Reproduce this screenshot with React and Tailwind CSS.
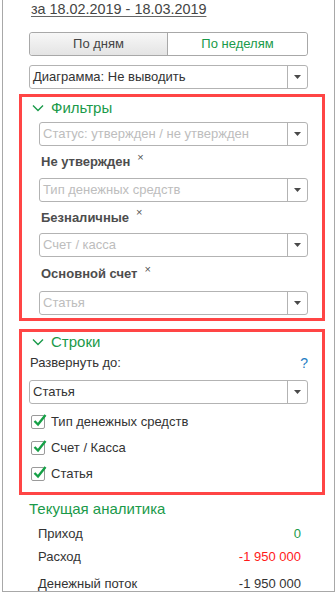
import React from "react";

const F = { fontFamily: '"Liberation Sans", Arial, sans-serif' };

function Arrow() {
  return (
    <svg width="7" height="4" viewBox="0 0 7 4">
      <path d="M0 0 H7 L3.5 4 Z" fill="#4a4a4a" />
    </svg>
  );
}

function Combo({ text, placeholder, className }) {
  return (
    <div className={"flex h-[24px] rounded-[3px] border border-[#b3b3b3] bg-white " + className}>
      <div className={"flex flex-1 items-center pl-[3px] text-[13px] " + (placeholder ? "text-[#bdbdbd]" : "text-[#333]")}>
        {text}
      </div>
      <div className="flex w-[20px] items-center justify-center border-l border-[#b3b3b3]">
        <Arrow />
      </div>
    </div>
  );
}

function Chevron() {
  return (
    <svg width="12" height="8" viewBox="0 0 12 8" className="mr-[7px]">
      <path d="M1 1.5 L6 6.5 L11 1.5" stroke="#1a9a4a" strokeWidth="1.4" fill="none" />
    </svg>
  );
}

function Check({ label }) {
  return (
    <div className="flex h-[26px] items-center pl-[9px]">
      <div className="relative h-[14px] w-[14px] rounded-[2px] border border-[#9a9a9a] bg-white">
        <svg width="16" height="16" viewBox="0 0 16 16" className="absolute left-[0px] top-[-4px]">
          <path d="M2.5 9 L6 12.5 L13.5 3" stroke="#15a046" strokeWidth="2.4" fill="none" />
        </svg>
      </div>
      <span className="ml-[6px] text-[13px] text-[#333]">{label}</span>
    </div>
  );
}

function FilterLabel({ text, h }) {
  return (
    <div className={"flex items-center pl-[19px] " + h}>
      <span className="text-[13px] font-bold text-[#4d4d4d]">{text}</span>
      <span className="ml-[7px] -mt-[10px] text-[11px] text-[#555]">×</span>
    </div>
  );
}

export default function App() {
  return (
    <div className="h-[593px] w-[336px] bg-white" style={F}>
      <div className="ml-[2px] h-[592px] w-[333px] border-x border-b border-[#a8a8a8]">
        <div className="h-[17px] pl-[28px] pt-[1px] leading-[16px]">
          <span className="text-[14.4px] leading-[16px] text-[#444] underline decoration-[#666] underline-offset-[2px]">
            за 18.02.2019 - 18.03.2019
          </span>
        </div>
        <div className="ml-[26px] mt-[15px] flex h-[24px] w-[279px] rounded-[3px] border border-[#a8a8a8] text-[13px]">
          <div className="flex w-[138px] items-center justify-center rounded-l-[3px] border-r border-[#a8a8a8] bg-gradient-to-b from-[#f7f7f7] to-[#e4e4e4] text-[#444]">
            По дням
          </div>
          <div className="flex flex-1 items-center justify-center rounded-r-[3px] bg-white text-[#1a9a4a]">
            По неделям
          </div>
        </div>
        <Combo text="Диаграмма: Не выводить" className="ml-[26px] mt-[9px] w-[279px]" />

        <div className="ml-[16px] mt-[5px] w-[306px] border-[3px] border-[#ff4545] pb-[3px]">
          <div className="flex h-[22px] items-center pl-[10px]">
            <Chevron />
            <span className="text-[15px] text-[#1a9a4a]">Фильтры</span>
          </div>
          <Combo placeholder text="Статус: утвержден / не утвержден" className="ml-[17px] mt-[3px] w-[269px]" />
          <FilterLabel text="Не утвержден" h="h-[32px]" />
          <Combo placeholder text="Тип денежных средств" className="ml-[17px] w-[269px]" />
          <FilterLabel text="Безналичные" h="h-[31px]" />
          <Combo placeholder text="Счет / касса" className="ml-[17px] w-[269px]" />
          <FilterLabel text="Основной счет" h="h-[34px]" />
          <Combo placeholder text="Статья" className="ml-[17px] w-[269px]" />
        </div>

        <div className="ml-[16px] mt-[8px] w-[306px] border-[3px] border-[#ff4545] pb-[5px]">
          <div className="flex h-[20px] items-center pl-[10px]">
            <Chevron />
            <span className="text-[15px] text-[#1a9a4a]">Строки</span>
          </div>
          <div className="flex h-[22px] items-center justify-between pl-[8px] pr-[14px]">
            <span className="text-[13px] text-[#333]">Развернуть до:</span>
            <span className="text-[14px] text-[#1f7ec4]">?</span>
          </div>
          <Combo text="Статья" className="ml-[7px] mt-[6px] w-[279px]" />
          <div className="mt-[5px]">
            <Check label="Тип денежных средств" />
            <Check label="Счет / Касса" />
            <Check label="Статья" />
          </div>
        </div>

        <div className="flex h-[28px] items-center pl-[26px]">
          <span className="text-[15px] text-[#1a9a4a]">Текущая аналитика</span>
        </div>
        <div className="pl-[35px] pr-[33px] text-[13px] text-[#333]">
          <div className="flex h-[22px] items-center justify-between">
            <span>Приход</span>
            <span className="text-[#1a9a4a]">0</span>
          </div>
          <div className="flex h-[24px] items-center justify-between">
            <span>Расход</span>
            <span className="text-[#ff1a1a]">-1 950 000</span>
          </div>
          <div className="flex h-[23px] items-center justify-between pt-[6px] leading-[17px]">
            <span>Денежный поток</span>
            <span>-1 950 000</span>
          </div>
        </div>
      </div>
    </div>
  );
}
